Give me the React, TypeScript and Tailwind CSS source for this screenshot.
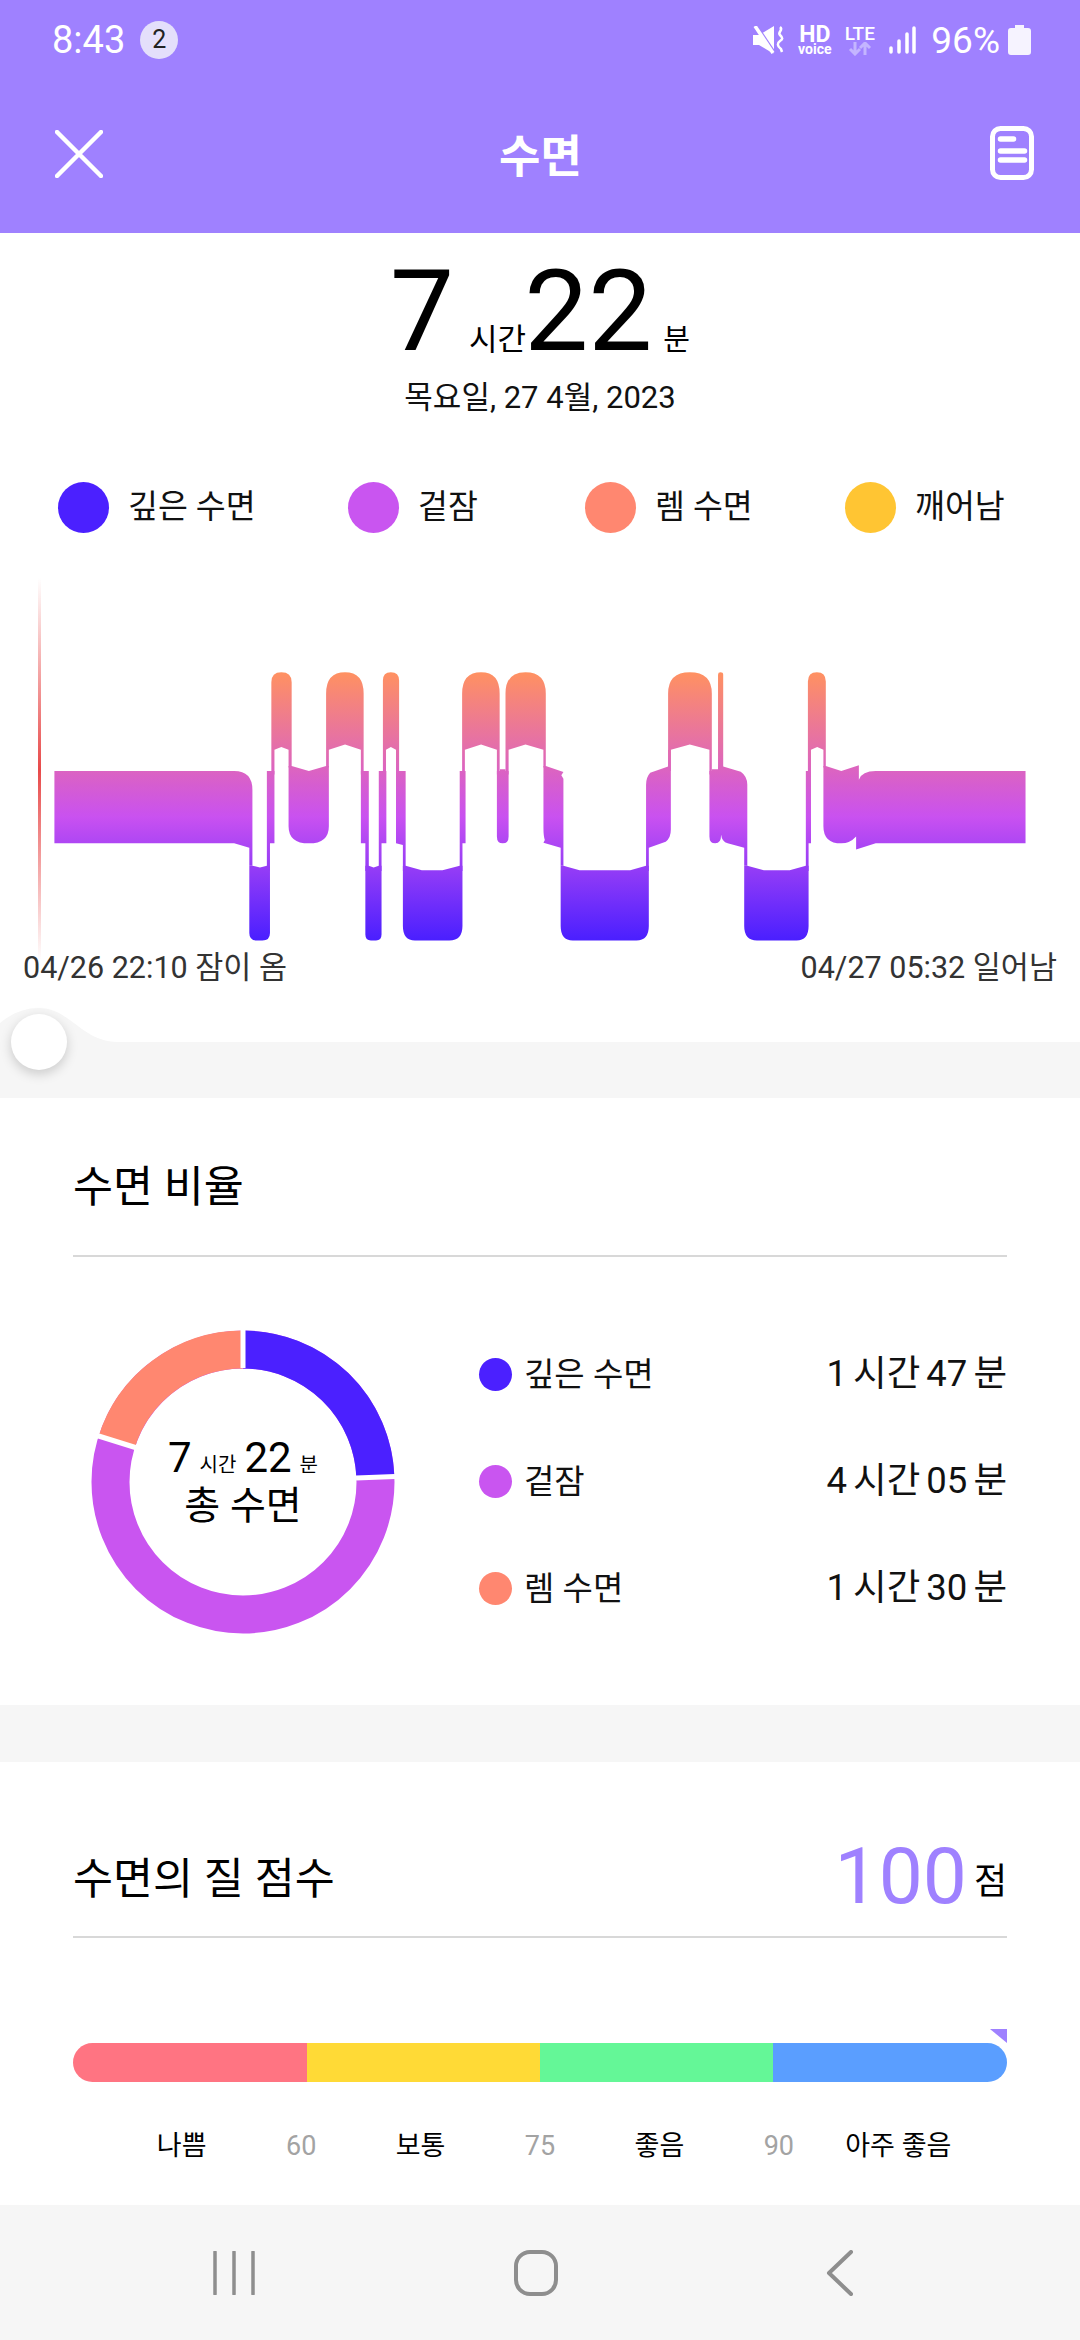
const FONT = "font-['Roboto','Noto_Sans_CJK_KR',sans-serif]"

function StatusBar() {
  return (
    <div className="h-[78px] flex items-center justify-between pl-[52px] pr-[49px] pt-[2px] text-white">
      <div className="flex items-center gap-[15px]">
        <span className="text-[38px] leading-none">8:43</span>
        <span className="w-[38px] h-[38px] rounded-full bg-[#e4dffb] text-[#222] text-[25px] flex items-center justify-center">2</span>
      </div>
      <div className="flex items-center">
        <svg width="31" height="28" viewBox="0 0 31 28" className="mr-[14px]">
          <path d="M0 9h6l15-9v28L6 19H0z" fill="#fff" />
          <path d="M5 2l18 27" stroke="#9f81ff" strokeWidth="3" />
          <path d="M2 0l18 27" stroke="#fff" strokeWidth="3.500" />
          <path d="M27 1c4 3-3 5 0 8s3 4 0 6-3 5 1 8l1 3" fill="none" stroke="#fff" strokeWidth="2.500" />
        </svg>
        <div className="w-[33px] mr-3 flex flex-col items-center font-bold">
          <span className="text-[23px] h-[18px] leading-[18px]">HD</span>
          <span className="text-[14px] h-[11px] leading-[11px]">voice</span>
        </div>
        <div className="w-[33px] mr-[13px] flex flex-col items-center">
          <span className="text-[19px] font-medium h-[17px] leading-[17px]">LTE</span>
          <svg width="26" height="14" viewBox="0 0 26 14" className="text-[#c4b5ff]">
            <path d="M8 0v12M3 7l5 5 5-5M18 13V1M13 6l5-5 5 5" fill="none" stroke="currentColor" strokeWidth="3" />
          </svg>
        </div>
        <svg width="27" height="28" viewBox="0 0 27 28" className="mr-[15px]">
          <path d="M2 22v4M10 15v11M18 8v18M25 2v24" stroke="#fff" strokeWidth="3.500" strokeLinecap="round" />
        </svg>
        <span className="text-[37px] leading-none mr-2">96%</span>
        <svg width="23" height="30" viewBox="0 0 23 30">
          <path d="M7 0h9v3h4a3 3 0 0 1 3 3v21a3 3 0 0 1-3 3H3a3 3 0 0 1-3-3V6a3 3 0 0 1 3-3h4z" fill="#f6f3ff" />
        </svg>
      </div>
    </div>
  )
}

function AppBar() {
  return (
    <div className="h-[155px] flex items-start pl-[55px] pr-[46px]">
      <div className="flex-1">
        <svg width="48" height="48" viewBox="0 0 48 48" className="mt-[52px]">
          <path d="M2 2l44 44M46 2L2 46" stroke="#fff" strokeWidth="4.500" strokeLinecap="round" />
        </svg>
      </div>
      <span className="mt-[50px] text-[45px] leading-[60px] font-bold text-white -ml-[8px]">수면</span>
      <div className="flex-1 flex justify-end">
        <svg width="44" height="54" viewBox="0 0 44 54" className="mt-[48px]">
          <rect x="2.500" y="2.500" width="39" height="49" rx="8" fill="none" stroke="#fff" strokeWidth="5" />
          <path d="M10.500 13h13M10.500 25h24M10.500 34h24" stroke="#fff" strokeWidth="5.500" strokeLinecap="round" />
        </svg>
      </div>
    </div>
  )
}

function LegendDot({ color, label, className }: { color: string; label: string; className: string }) {
  return (
    <div className={`flex items-center gap-[19px] ${className}`}>
      <span className="w-[51px] h-[51px] rounded-full" style={{ backgroundColor: color }} />
      <span className="text-[32.500px] text-[#111]">{label}</span>
    </div>
  )
}

function SleepChart() {
  return (
    <svg width="1080" height="400" viewBox="0 560 1080 400" className="block">
      <defs>
        <linearGradient id="redLine" gradientUnits="userSpaceOnUse" x1="0" y1="577" x2="0" y2="960">
          <stop offset="0" stopColor="#e84a4a" stopOpacity="0" />
          <stop offset="0.5" stopColor="#e84a4a" />
          <stop offset="1" stopColor="#e84a4a" stopOpacity="0" />
        </linearGradient>
        <linearGradient id="stage" gradientUnits="userSpaceOnUse" x1="0" y1="323" x2="0" y2="1102">
          <stop offset="0" stopColor="#ff9161" />
          <stop offset="0.368" stopColor="#db63c2" />
          <stop offset="0.54" stopColor="#c951f0" />
          <stop offset="1" stopColor="#4a1fff" />
        </linearGradient>
      </defs>
      <rect x="38" y="577" width="3" height="383" fill="url(#redLine)" />
      <g transform="translate(0 560) scale(0.34435)" fill="url(#stage)">
        <path d="M158 610H680Q733 610 733 665V885H724V833L680 820H158Z" />
        <path d="M724 885H733L755 890L775 885H784V1080Q784 1102 762 1102H746Q724 1102 724 1080Z" />
        <path d="M775 610H797V820H784V900H775Z" />
        <path d="M788 352Q788 323 817 323Q847 323 847 352V600H838V548L817 540L797 548V620H788Z" />
        <path d="M838 595H847L897 610L947 595H955V770Q955 820 897 820Q838 820 838 770Z" />
        <path d="M947 385Q947 323 1002 323Q1056 323 1056 385V620H1048V548L1002 533L955 548V600H947Z" />
        <path d="M1048 610H1071V900H1061V820H1048Z" />
        <path d="M1061 885H1071L1085 890L1100 885H1108V1085Q1108 1102 1092 1102H1077Q1061 1102 1061 1085Z" />
        <path d="M1100 610H1122V820H1108V900H1100Z" />
        <path d="M1112 347Q1112 323 1135 323Q1159 323 1159 347V620H1150V548L1135 540L1121 548V620H1112Z" />
        <path d="M1150 610H1178V900H1170V825L1150 820Z" />
        <path d="M1170 885H1178L1225 898H1285L1335 885H1343V1060Q1343 1102 1305 1102H1205Q1170 1102 1170 1060Z" />
        <path d="M1335 610H1352V820H1343V900H1335Z" />
        <path d="M1342 385Q1342 323 1397 323Q1451 323 1451 385V620H1443V548L1397 533L1350 548V620H1342Z" />
        <path d="M1443 610H1452V605H1468V610H1477V800Q1477 820 1460 820Q1443 820 1443 800Z" />
        <path d="M1468 385Q1468 323 1526 323Q1585 323 1585 385V600H1578V548L1526 533L1477 548V620H1468Z" />
      </g>
      <g transform="translate(540 560) scale(0.34435)" fill="url(#stage)">
        <path d="M10 595H17L68 613L62 622L68 632V885H60V833L10 818L14 810Q10 800 10 775Z" />
        <path d="M60 885H68L115 898H262L308 885H316V1060Q316 1102 280 1102H95Q60 1102 60 1060Z" />
        <path d="M308 650Q308 628 320 615L372 597V548H380V780Q380 805 365 815L316 833V900H308Z" />
        <path d="M372 385Q372 323 435 323Q499 323 499 385V620H492V548L435 533L380 548V610H372Z" />
        <path d="M492 610H499V605H517V597H532L583 612Q602 625 602 650V885H593V833L545 820Q528 815 526 795Q526 820 509 820Q492 820 492 800Z" />
        <path d="M517 330Q517 323 524 323Q532 323 532 330V610H517Z" />
        <path d="M593 885H602L650 898H725L772 885H780V1060Q780 1102 745 1102H630Q593 1102 593 1060Z" />
        <path d="M772 610H787V820H780V900H772Z" />
        <path d="M778 350Q778 323 804 323Q830 323 830 350V600H823V548L805 540L787 548V620H778Z" />
        <path d="M823 595H830L875 610L926 593V635Q935 610 975 610H1410V820H975L918 838V800Q900 820 875 820Q823 820 823 770Z" />
      </g>
    </svg>
  )
}

function Slider() {
  return (
    <div className="relative h-[56px] bg-[#f6f6f6]">
      {/* the grey band bulges up round the thumb */}
      <svg width="120" height="35" viewBox="0 0 120 35" className="absolute left-0 top-[-34px]">
        <path d="M0 15C12 5 25 0 39 0C70 0 82 34 118 34V35H0Z" fill="#f6f6f6" />
      </svg>
      <span className="absolute left-[11px] top-[-28px] w-[56px] h-[56px] rounded-full bg-white shadow-[0_4px_12px_rgba(0,0,0,0.18)]" />
    </div>
  )
}

function DonutChart() {
  return (
    <div className="relative w-[304px] h-[304px] shrink-0">
      <svg width="304" height="304" viewBox="0 0 304 304" className="block">
        <circle cx="152" cy="152" r="132.500" fill="none" stroke="#c955f0" strokeWidth="38" />
        <path d="M152 19.500A132.500 132.500 0 0 1 284.400 147" fill="none" stroke="#4b20ff" strokeWidth="38" />
        <path d="M25.200 113.500A132.500 132.500 0 0 1 152 19.500" fill="none" stroke="#ff8770" strokeWidth="38" />
        <path d="M152 0V38M304 146.500L265 148M6 105.500L46 118" stroke="#fff" strokeWidth="5" />
      </svg>
      <div className="absolute inset-0 flex flex-col items-center pt-[107px] text-black">
        <div className="flex items-baseline leading-none whitespace-nowrap">
          <span className="text-[42px]">7</span>
          <span className="text-[20px] ml-[8px]">시간</span>
          <span className="text-[42px] ml-[8px]">22</span>
          <span className="text-[20px] ml-[8px]">분</span>
        </div>
        <span className="text-[39px] leading-none mt-[8px]">총 수면</span>
      </div>
    </div>
  )
}

function RatioRow({ color, label, hours, minutes }: { color: string; label: string; hours: string; minutes: string }) {
  return (
    <div className="h-[107px] flex items-center">
      <span className="w-[33px] h-[33px] rounded-full mr-3" style={{ backgroundColor: color }} />
      <span className="text-[33px] text-[#111]">{label}</span>
      <span className="ml-auto text-[36.500px] [word-spacing:-3px] text-[#111]">{hours} 시간 {minutes} 분</span>
    </div>
  )
}

const SCALE_LABELS = [
  { text: '나쁨', muted: false },
  { text: '60', muted: true },
  { text: '보통', muted: false },
  { text: '75', muted: true },
  { text: '좋음', muted: false },
  { text: '90', muted: true },
  { text: '아주 좋음', muted: false },
]

export default function App() {
  return (
    <div className={`w-[1080px] h-[2340px] overflow-hidden bg-[#f6f6f6] flex flex-col ${FONT}`}>
      <header className="bg-[#9f81ff]">
        <StatusBar />
        <AppBar />
      </header>

      <section className="bg-white h-[809px]">
        <div className="flex items-baseline justify-center text-black mt-[18px] h-[120px] leading-none">
          <span className="text-[114px] leading-[120px]">7</span>
          <span className="text-[31px] ml-[15px] -mr-[2px]">시간</span>
          <span className="text-[114px] leading-[120px]">22</span>
          <span className="text-[29px] ml-[11px]">분</span>
        </div>
        <p className="text-center text-[31px] leading-[40px] text-[#111] mt-[7px]">목요일, 27 4월, 2023</p>
        <div className="relative h-[51px] mt-[64px]">
          <LegendDot color="#4b20ff" label="깊은 수면" className="absolute left-[58px] top-0" />
          <LegendDot color="#c955f0" label="겉잠" className="absolute left-[348px] top-0" />
          <LegendDot color="#ff8770" label="렘 수면" className="absolute left-[585px] top-0" />
          <LegendDot color="#ffc533" label="깨어남" className="absolute left-[845px] top-0" />
        </div>
        <div className="relative mt-[28px]">
          <SleepChart />
          <div className="flex justify-between px-[23px] text-[30.500px] leading-[40px] text-[#333] -mt-[13px] relative">
            <span>04/26 22:10 잠이 옴</span>
            <span>04/27 05:32 일어남</span>
          </div>
        </div>
      </section>

      <Slider />

      <section className="bg-white h-[607px] px-[73px]">
        <h2 className="text-[43.500px] font-normal text-black h-[159px] pt-[60px] leading-[60px] border-b-2 border-[#d8d8d8]">수면 비율</h2>
        <div className="flex items-center mt-[64px]">
          <div className="ml-[18px]">
            <DonutChart />
          </div>
          <div className="flex-1 ml-[84px]">
            <RatioRow color="#4b20ff" label="깊은 수면" hours="1" minutes="47" />
            <RatioRow color="#c955f0" label="겉잠" hours="4" minutes="05" />
            <RatioRow color="#ff8770" label="렘 수면" hours="1" minutes="30" />
          </div>
        </div>
      </section>

      <section className="bg-white h-[443px] mt-[57px] px-[73px]">
        <div className="flex items-end justify-between h-[176px] pb-[21px] border-b-2 border-[#d8d8d8]">
          <h2 className="text-[43.500px] font-normal text-black leading-[60px] mb-[5px]">수면의 질 점수</h2>
          <div className="flex items-end leading-none">
            <span className="text-[78.500px] text-[#9f81ff]">100</span>
            <span className="text-[36px] text-black ml-[7px] mb-[15px]">점</span>
          </div>
        </div>
        <div className="mt-[105px] h-[39px] rounded-full overflow-hidden flex">
          <span className="w-[234px] bg-[#ff7482]" />
          <span className="w-[233px] bg-[#ffda36]" />
          <span className="w-[233px] bg-[#64f797]" />
          <span className="flex-1 bg-[#5a9eff]" />
        </div>
        <div className="relative">
          <svg width="17" height="14" viewBox="0 0 17 14" className="absolute left-[917px] top-[-53px]">
            <path d="M0 0H17V14Z" fill="#9f81ff" />
          </svg>
        </div>
        <div className="grid grid-cols-7 w-[836px] ml-[49px] mt-[46px] text-center text-[27px] leading-[36px]">
          {SCALE_LABELS.map(item => (
            <span key={item.text} className={item.muted ? 'text-[#a3a3a3]' : 'text-black'}>{item.text}</span>
          ))}
        </div>
      </section>

      <nav className="flex-1 flex items-center bg-[#f6f6f6] pl-[212px]">
        <svg width="44" height="44" viewBox="0 0 44 44" className="mr-[258px]">
          <path d="M3 1v42M22 1v42M41 1v42" stroke="#8e8e8e" strokeWidth="3.500" strokeLinecap="round" />
        </svg>
        <svg width="44" height="46" viewBox="0 0 44 46" className="mr-[268px]">
          <rect x="2" y="2" width="40" height="42" rx="14" fill="none" stroke="#8e8e8e" strokeWidth="4" />
        </svg>
        <svg width="28" height="46" viewBox="0 0 28 46">
          <path d="M25 2L3 23l22 21" fill="none" stroke="#8e8e8e" strokeWidth="4" strokeLinecap="round" strokeLinejoin="round" />
        </svg>
      </nav>
    </div>
  )
}
